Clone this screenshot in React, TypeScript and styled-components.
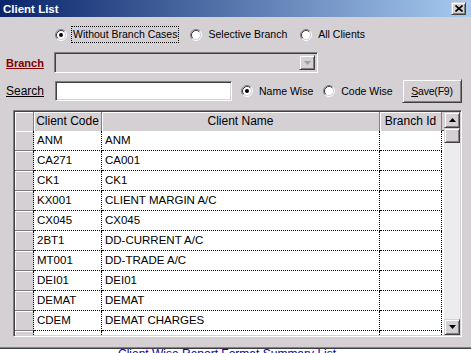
import React from "react";
import styled, { createGlobalStyle, css } from "styled-components";

const FACE = "#d4d0d4";
const SHADOW = "#808080";
const DARK = "#404040";

const GlobalStyle = createGlobalStyle`
  html, body {
    margin: 0;
    padding: 0;
    background: ${FACE};
    overflow: hidden;
  }
  * {
    box-sizing: border-box;
  }
`;

const raised = css`
  border: 1px solid;
  border-color: ${FACE} ${DARK} ${DARK} ${FACE};
  box-shadow: inset 1px 1px 0 #fff, inset -1px -1px 0 ${SHADOW};
  background: ${FACE};
`;

const sunken = css`
  border: 1px solid;
  border-color: ${SHADOW} #fff #fff ${SHADOW};
  box-shadow: inset 1px 1px 0 ${DARK}, inset -1px -1px 0 ${FACE};
`;

const clients = [
  { code: "ANM", name: "ANM" },
  { code: "CA271", name: "CA001" },
  { code: "CK1", name: "CK1" },
  { code: "KX001", name: "CLIENT MARGIN A/C" },
  { code: "CX045", name: "CX045" },
  { code: "2BT1", name: "DD-CURRENT A/C" },
  { code: "MT001", name: "DD-TRADE A/C" },
  { code: "DEI01", name: "DEI01" },
  { code: "DEMAT", name: "DEMAT" },
  { code: "CDEM", name: "DEMAT CHARGES" },
  { code: "", name: "" },
];

const RadioMark = ({ checked }: { checked?: boolean }) => (
  <svg width="12" height="12" viewBox="0 0 12 12">
    <circle cx="6" cy="6" r="4.5" fill="#fff" />
    <path d="M9.89 2.11 A5.5 5.5 0 0 0 2.11 9.89" fill="none" stroke={SHADOW} />
    <path d="M2.11 9.89 A5.5 5.5 0 0 0 9.89 2.11" fill="none" stroke="#fff" />
    <path d="M9.18 2.82 A4.5 4.5 0 0 0 2.82 9.18" fill="none" stroke={DARK} />
    <path d="M2.82 9.18 A4.5 4.5 0 0 0 9.18 2.82" fill="none" stroke={FACE} />
    {checked && <circle cx="6" cy="6" r="2" fill="#000" />}
  </svg>
);

const Arrow = ({ down, color = "#000" }: { down?: boolean; color?: string }) => (
  <svg width="7" height="4" viewBox="0 0 7 4">
    <path d={down ? "M0 0 H7 L3.5 4 Z" : "M0 4 H7 L3.5 0 Z"} fill={color} />
  </svg>
);

const Option = ({ label, checked, focused }: { label: string; checked?: boolean; focused?: boolean }) => (
  <RadioOption>
    <RadioMark checked={checked} />
    <OptionLabel $focused={focused}>{label}</OptionLabel>
  </RadioOption>
);

export default function App() {
  return (
    <Window>
      <GlobalStyle />
      <TitleBar>
        <TitleText>Client List</TitleText>
        <CloseButton>
          <svg width="8" height="7" viewBox="0 0 8 7">
            <path d="M0.5 0.5 L7.5 6.5 M7.5 0.5 L0.5 6.5" stroke="#000" strokeWidth="1.6" />
          </svg>
        </CloseButton>
      </TitleBar>
      <Body>
        <ModeRow>
          <Option label="Without Branch Cases" checked focused />
          <Option label="Selective Branch" />
          <Option label="All Clients" />
        </ModeRow>
        <FieldRow $gap={9}>
          <FieldLabel $tone="branch">Branch</FieldLabel>
          <Combo>
            <ComboButton>
              <Arrow down color="#a09ca0" />
            </ComboButton>
          </Combo>
        </FieldRow>
        <FieldRow $gap={6} $height={24}>
          <FieldLabel $tone="search">Search</FieldLabel>
          <TextBox />
          <SearchModes>
            <Option label="Name Wise" checked />
            <Option label="Code Wise" />
          </SearchModes>
          <SaveButton>
            <u>S</u>ave(F9)
          </SaveButton>
        </FieldRow>
        <GridFrame>
          <GridTable>
            <GridRow>
              <HeaderCell />
              <HeaderCell>Client Code</HeaderCell>
              <HeaderCell>Client Name</HeaderCell>
              <HeaderCell>Branch Id</HeaderCell>
            </GridRow>
            {clients.map((c, i) => (
              <GridRow key={i}>
                <SelectorCell />
                <DataCell>{c.code}</DataCell>
                <DataCell>{c.name}</DataCell>
                <DataCell />
              </GridRow>
            ))}
          </GridTable>
          <ScrollBar>
            <ScrollButton>
              <Arrow />
            </ScrollButton>
            <ScrollThumb />
            <ScrollTrack />
            <ScrollButton>
              <Arrow down />
            </ScrollButton>
          </ScrollBar>
        </GridFrame>
      </Body>
      <BottomEdge />
      <Footer>
        <FooterLink>Client Wise Report Format Summary List</FooterLink>
      </Footer>
    </Window>
  );
}

const Window = styled.div`
  width: 471px;
  height: 353px;
  display: flex;
  flex-direction: column;
  background: ${FACE};
  font-family: "Liberation Sans", Arial, sans-serif;
  font-size: 11px;
  color: #000;
  overflow: hidden;
`;

const TitleBar = styled.div`
  height: 17px;
  flex-shrink: 0;
  display: flex;
  align-items: center;
  justify-content: space-between;
  padding: 0 5px 0 3px;
  background: linear-gradient(to right, #0a246a, #a6caf0);
`;

const TitleText = styled.span`
  color: #fff;
  font-weight: bold;
  font-size: 11.5px;
`;

const CloseButton = styled.div`
  ${raised};
  width: 15px;
  height: 13px;
  display: flex;
  align-items: center;
  justify-content: center;
`;

const Body = styled.div`
  flex: 1;
  display: flex;
  flex-direction: column;
  padding: 0 9px 0 6px;
`;

const ModeRow = styled.div`
  display: flex;
  align-items: center;
  height: 17px;
  margin-top: 9px;
  padding-left: 49px;
  gap: 11px;
`;

const RadioOption = styled.label`
  display: flex;
  align-items: center;
  gap: 4px;
  white-space: nowrap;
`;

const OptionLabel = styled.span<{ $focused?: boolean }>`
  font-size: 10.5px;
  line-height: 15px;
  padding: 0 1px;
  border: 1px dotted ${(p) => (p.$focused ? "#000" : "transparent")};
`;

const FieldRow = styled.div<{ $gap: number; $height?: number }>`
  display: flex;
  align-items: center;
  margin-top: ${(p) => p.$gap}px;
  height: ${(p) => p.$height ?? 21}px;
`;

const FieldLabel = styled.span<{ $tone: "branch" | "search" }>`
  width: 48px;
  flex-shrink: 0;
  text-decoration: underline;
  ${(p) =>
    p.$tone === "branch"
      ? css`
          color: #800000;
          font-weight: bold;
          font-size: 11px;
        `
      : css`
          color: #000;
          font-size: 12px;
        `}
`;

const Combo = styled.div`
  ${sunken};
  width: 264px;
  height: 21px;
  background: ${FACE};
  display: flex;
  justify-content: flex-end;
  padding: 2px;
`;

const ComboButton = styled.div`
  ${raised};
  width: 16px;
  height: 100%;
  display: flex;
  align-items: center;
  justify-content: center;
`;

const TextBox = styled.div`
  ${sunken};
  margin-left: 1px;
  width: 177px;
  height: 20px;
  background: #fff;
`;

const SearchModes = styled.div`
  display: flex;
  align-items: center;
  gap: 8px;
  margin-left: 9px;
`;

const SaveButton = styled.div`
  ${raised};
  margin-left: auto;
  width: 60px;
  height: 24px;
  display: flex;
  align-items: center;
  justify-content: center;
  font-size: 10.5px;
  letter-spacing: -0.2px;
`;

const GridFrame = styled.div`
  ${sunken};
  margin: 7px 0 0 7px;
  height: 227px;
  padding: 1px;
  display: flex;
  overflow: hidden;
`;

const GridTable = styled.div`
  flex: 1;
  background: #fff;
  overflow: hidden;
`;

const GridRow = styled.div`
  display: grid;
  grid-template-columns: 19px 68px 278px 62px;
  height: 20px;
  &:first-child {
    height: 19px;
    background: ${FACE};
    box-shadow: inset 0 -1px 0 ${DARK};
  }
`;

const HeaderCell = styled.div`
  background: ${FACE};
  border-right: 1px solid ${SHADOW};
  box-shadow: inset 1px 1px 0 #fff;
  font-size: 12px;
  line-height: 18px;
  text-align: center;
  white-space: nowrap;
  overflow: hidden;
`;

const SelectorCell = styled.div`
  background: ${FACE};
  border-right: 1px dotted #000;
  border-bottom: 1px solid ${SHADOW};
  box-shadow: inset 1px 1px 0 #fff;
`;

const DataCell = styled.div`
  border-right: 1px dotted #000;
  border-bottom: 1px dotted #000;
  padding-left: 3px;
  font-size: 11.5px;
  line-height: 19px;
  white-space: nowrap;
  overflow: hidden;
`;

const ScrollBar = styled.div`
  width: 16px;
  flex-shrink: 0;
  display: flex;
  flex-direction: column;
  background: #ecebee;
`;

const ScrollButton = styled.div`
  ${raised};
  height: 16px;
  flex-shrink: 0;
  display: flex;
  align-items: center;
  justify-content: center;
`;

const ScrollThumb = styled.div`
  ${raised};
  height: 15px;
  flex-shrink: 0;
`;

const ScrollTrack = styled.div`
  flex: 1;
`;

const BottomEdge = styled.div`
  height: 2px;
  flex-shrink: 0;
  border-top: 1px solid ${SHADOW};
  border-bottom: 1px solid ${DARK};
`;

const Footer = styled.div`
  height: 4px;
  flex-shrink: 0;
  background: #fff;
  overflow: hidden;
  padding-left: 118px;
`;

const FooterLink = styled.span`
  display: block;
  margin-top: -1px;
  color: #0000c0;
  font-size: 12px;
  line-height: 12px;
  text-decoration: underline;
  white-space: nowrap;
`;
